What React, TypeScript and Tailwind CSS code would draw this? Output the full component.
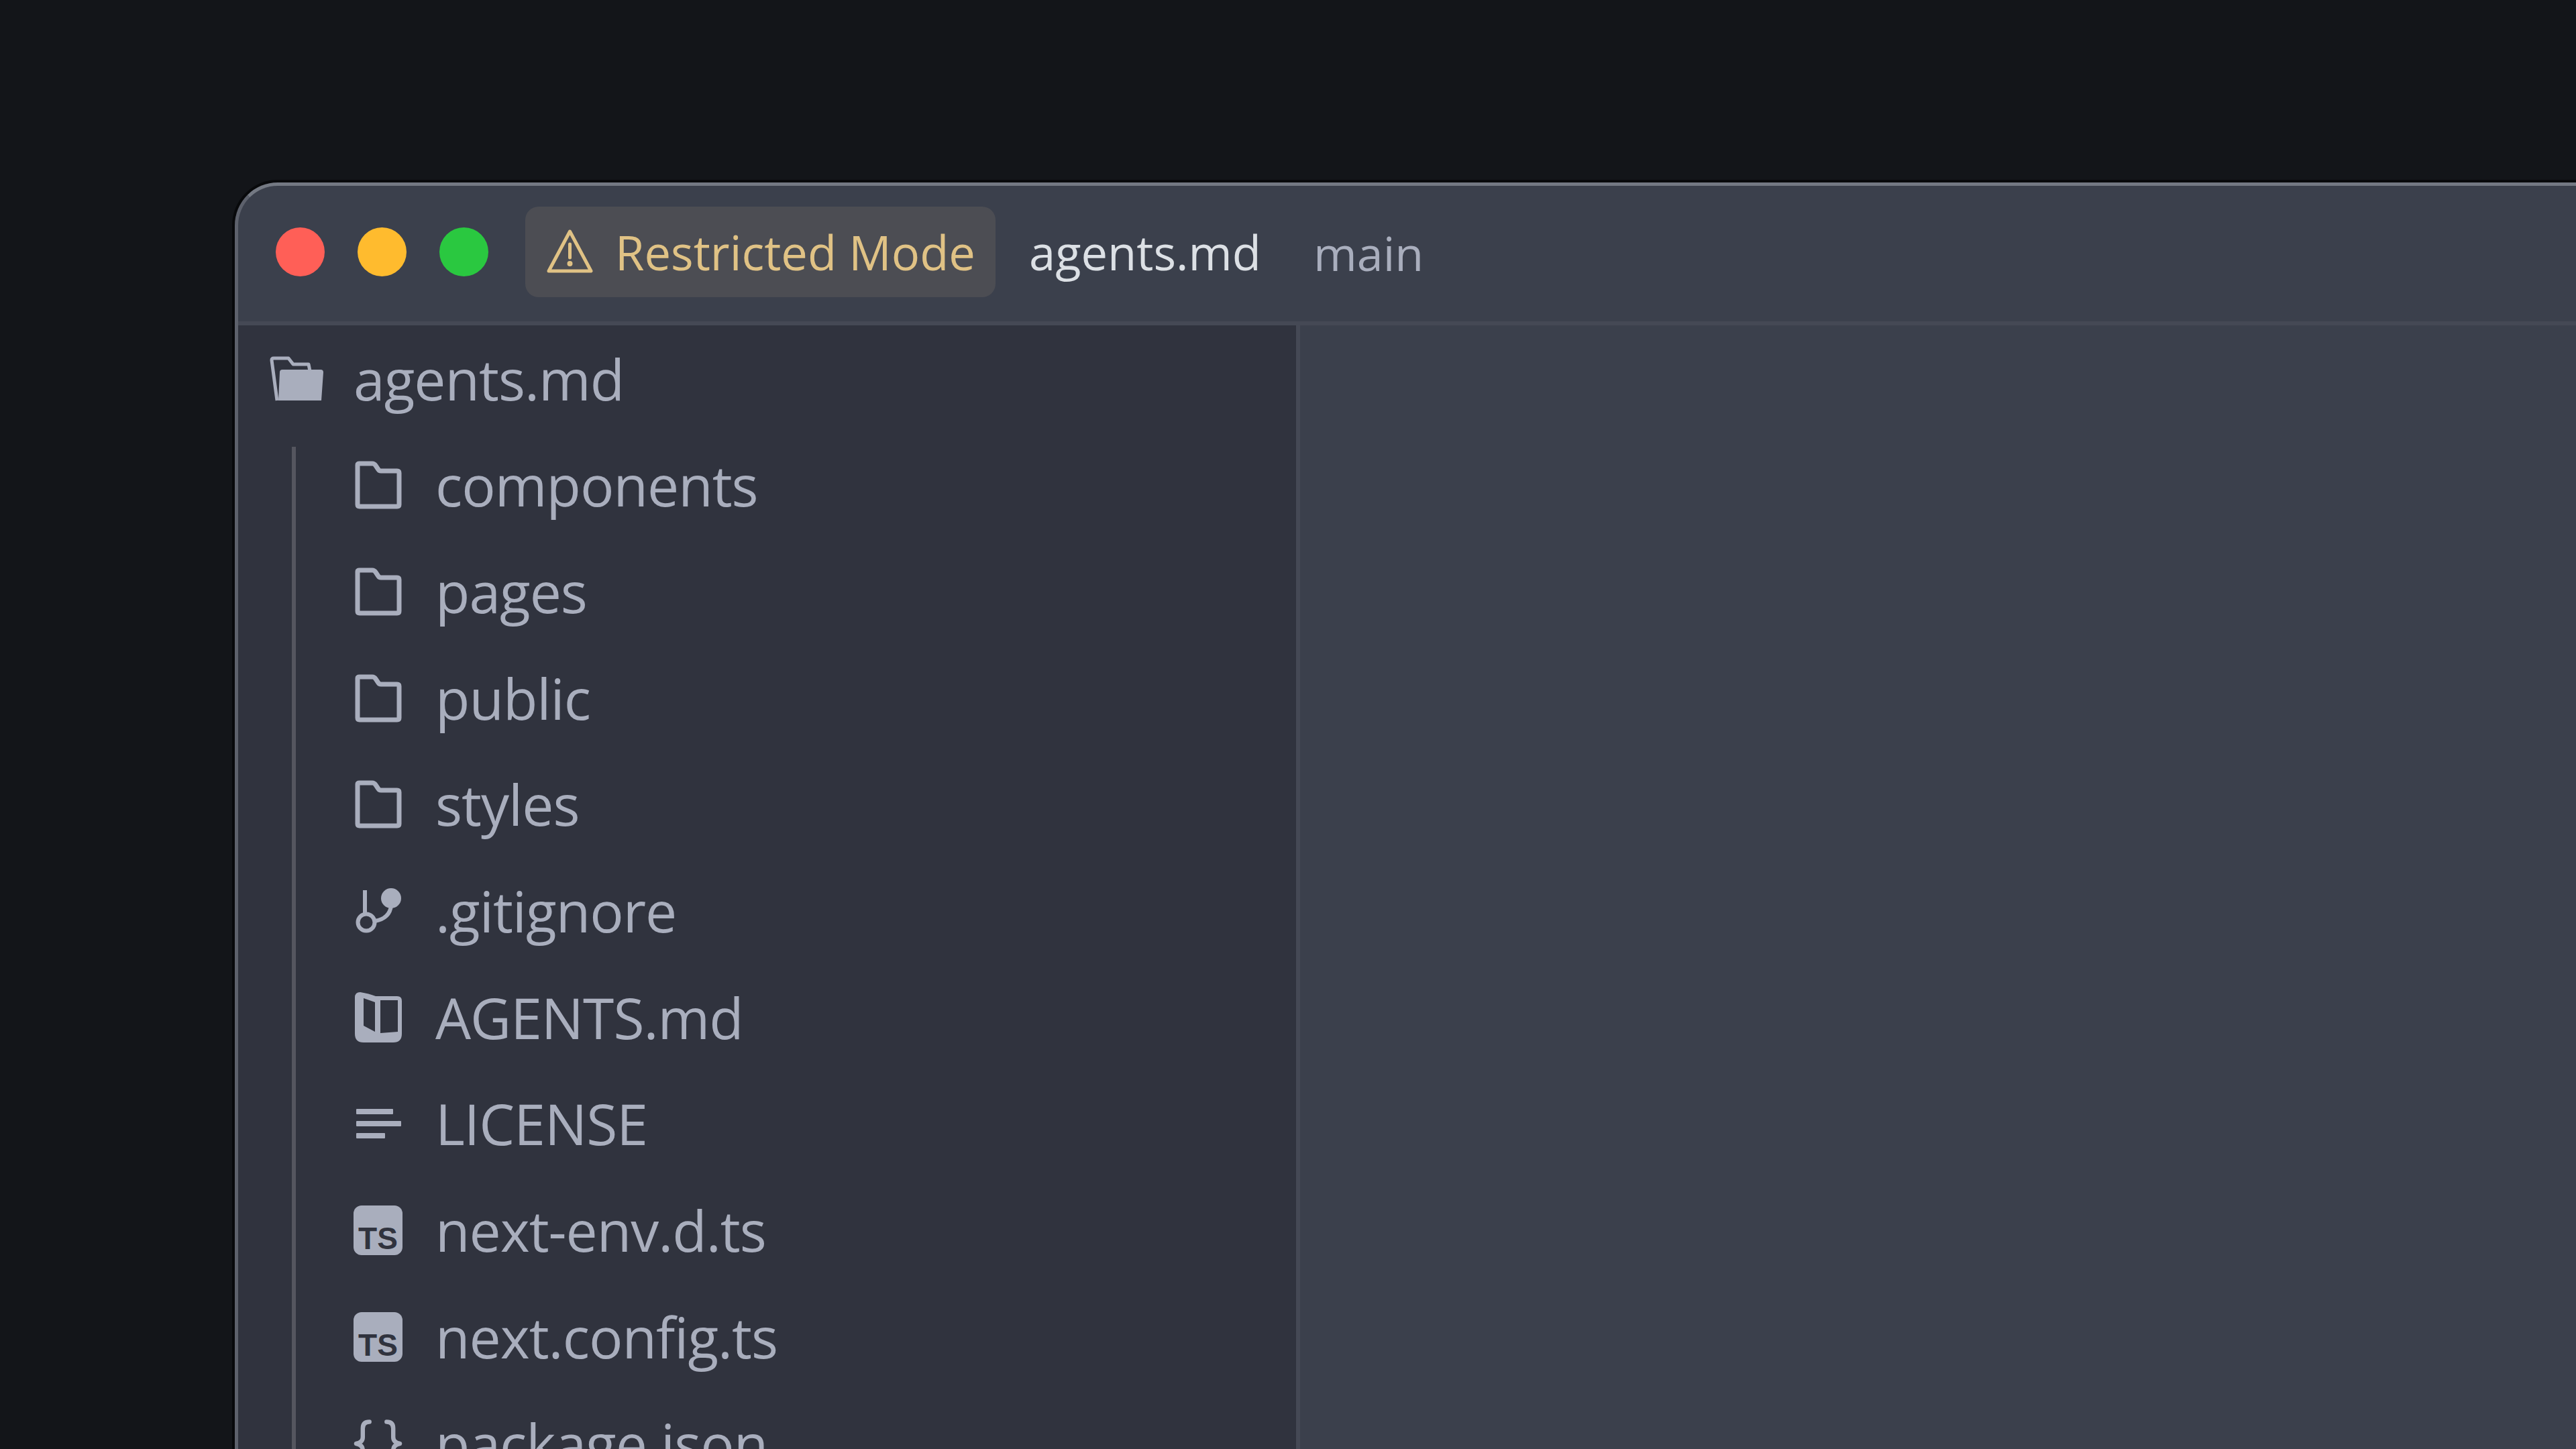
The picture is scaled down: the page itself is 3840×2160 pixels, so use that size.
const FileIcon = ({ kind }: { kind: string }) => {
    if (kind === 'folder') {
        return (
            <svg width="72" height="72" viewBox="0 0 72 72" fill="none" stroke="#a9aebd" strokeWidth="7" strokeLinejoin="round">
                <path d="M5 6 Q5 4 8 4 H27 Q30 4 32 7 L36 13 Q37 15 40 15 H64 Q67 15 67 18 V65 Q67 68 64 68 H8 Q5 68 5 65 Z" />
            </svg>
        );
    }
    if (kind === 'git') {
        return (
            <svg width="72" height="72" viewBox="0 0 72 72" fill="none" stroke="#a9aebd" strokeWidth="6">
                <path d="M16 5 V40" />
                <circle cx="18" cy="53" r="12.5" />
                <circle cx="55" cy="17" r="15" fill="#a9aebd" stroke="none" />
                <path d="M55 28 Q53 47 31 51" />
            </svg>
        );
    }
    if (kind === 'book') {
        return (
            <svg width="72" height="76" viewBox="0 0 72 76" fill="#a9aebd">
                <path
                    fillRule="evenodd"
                    d="M1 8 Q1 0 9 0 Q22 2 32 6 H64 Q71 6 71 13 V62 Q71 75 58 75 H14 Q1 75 1 62 Z M14 9 L31 15 V59 L14 50 Z M39 12 H65 V59 L39 61 Z"
                />
            </svg>
        );
    }
    if (kind === 'text') {
        return (
            <svg width="72" height="72" viewBox="0 0 72 72" fill="#a9aebd">
                <rect x="3" y="14" width="55" height="8" rx="1" />
                <rect x="3" y="32" width="67" height="8" rx="1" />
                <rect x="3" y="50" width="43" height="8" rx="1" />
            </svg>
        );
    }
    if (kind === 'ts') {
        return (
            <div className="w-[73px] h-[74px] rounded-[12px] bg-[#a9aebd] flex items-end justify-center font-['Liberation_Sans',sans-serif] font-bold tracking-normal text-[46px] leading-[50px] text-[#30333e]">
                TS
            </div>
        );
    }
    return (
        <svg width="74" height="72" viewBox="0 0 74 72" fill="none" stroke="#a9aebd" strokeWidth="6.5" strokeLinecap="round" strokeLinejoin="round">
            <path d="M24 3 Q14 3 14 13 V26 Q14 34 4 36 Q14 38 14 46 V59 Q14 69 24 69" />
            <path d="M50 3 Q60 3 60 13 V26 Q60 34 70 36 Q60 38 60 46 V59 Q60 69 50 69" />
        </svg>
    );
};

const files = [
    { name: 'components', kind: 'folder' },
    { name: 'pages', kind: 'folder' },
    { name: 'public', kind: 'folder' },
    { name: 'styles', kind: 'folder' },
    { name: '.gitignore', kind: 'git' },
    { name: 'AGENTS.md', kind: 'book' },
    { name: 'LICENSE', kind: 'text' },
    { name: 'next-env.d.ts', kind: 'ts' },
    { name: 'next.config.ts', kind: 'ts' },
    { name: 'package.json', kind: 'json' },
];

export default function App() {
    return (
        <div className="h-screen overflow-hidden bg-[#131519] pl-[350px] pt-[272px] font-['Open_Sans',sans-serif]">
            <div className="min-h-[2000px] rounded-tl-[64px] border-t-[5px] border-l-[5px] border-t-[#747983] border-l-[#5d616c] bg-[#3b404c] shadow-[0_0_0_4px_#08090b]">
                <div className="h-[208px] flex items-center border-b-[6px] border-[#454955] pl-[56px] pb-[6px]">
                    <div className="flex gap-[49px]">
                        <div className="w-[73px] h-[73px] rounded-full bg-[#ff5f57]" />
                        <div className="w-[73px] h-[73px] rounded-full bg-[#ffbb2e]" />
                        <div className="w-[73px] h-[73px] rounded-full bg-[#2ac840]" />
                    </div>
                    <div className="ml-[55px] h-[135px] w-[701px] rounded-[20px] bg-[#4c4d53] flex items-center pl-[32px] gap-[33px]">
                        <svg width="69" height="66" viewBox="0 0 69 66" fill="none" stroke="#e0c285" strokeWidth="5" strokeLinejoin="round" strokeLinecap="round">
                            <path d="M34.5 3 L66 62 H3 Z" />
                            <path d="M34.5 22 V42" />
                            <circle cx="34.5" cy="51" r="1.5" fill="#e0c285" />
                        </svg>
                        <span className="pt-[3px] text-[70.5px] leading-none text-[#e0c285] whitespace-nowrap">Restricted Mode</span>
                    </div>
                    <span className="ml-[50px] pt-[3px] text-[70.5px] leading-none text-[#dce0e5]">agents.md</span>
                    <span className="ml-[78px] pt-[3px] text-[70px] leading-none text-[#a9aebd]">main</span>
                </div>
                <div className="flex">
                    <div className="w-[1583px] bg-[#30333e] border-r-[6px] border-[#454955] pb-[100px]">
                        <div className="h-[159px] flex items-center pl-[47px] gap-[45px] text-[84px] tracking-[-1px] text-[#a9aebd]">
                            <svg width="80" height="68" viewBox="0 0 80 68" fill="none">
                                <path d="M11 66 L3 6 Q3 3 6 3 H28 L35 12 H58 L60 22" stroke="#a9aebd" strokeWidth="5" strokeLinejoin="round" />
                                <path d="M15 24 Q15 20 19 20 H76 Q80 20 80 24 L77 66 H13 Z" fill="#a9aebd" />
                            </svg>
                            <span className="leading-none">agents.md</span>
                        </div>
                        <div className="flex">
                            <div className="ml-[80px] mt-[22px] w-[6px] bg-[#55565f]" />
                            <div className="pl-[86px] flex flex-col">
                                {files.map((file) => (
                                    <div key={file.name} className="h-[158.7px] flex items-center gap-[49px] text-[84px] tracking-[-1px] text-[#a9aebd]">
                                        <div className="w-[73px] flex justify-center">
                                            <FileIcon kind={file.kind} />
                                        </div>
                                        <span className="leading-none whitespace-nowrap">{file.name}</span>
                                    </div>
                                ))}
                            </div>
                        </div>
                    </div>
                    <div className="flex-1" />
                </div>
            </div>
        </div>
    );
}
